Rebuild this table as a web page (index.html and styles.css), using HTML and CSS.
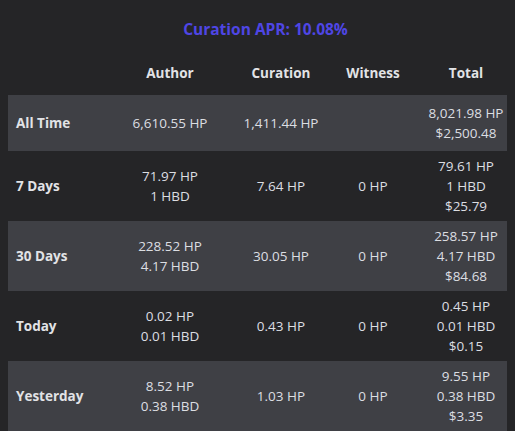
FILE: index.html
```html
<!DOCTYPE html>
<html>
<head>
<meta charset="utf-8">
<link rel="stylesheet" href="styles.css">
</head>
<body>
<div class="wrap">
  <div class="title">Curation APR: 10.08%</div>
  <table class="rewards">
    <colgroup>
      <col class="c-label"><col class="c-author"><col class="c-curation"><col class="c-witness"><col class="c-total">
    </colgroup>
    <thead>
      <tr class="head">
        <th></th><th>Author</th><th>Curation</th><th>Witness</th><th>Total</th>
      </tr>
    </thead>
    <tbody>
      <tr class="shaded short">
        <td class="label">All Time</td>
        <td>6,610.55 HP</td>
        <td>1,411.44 HP</td>
        <td></td>
        <td>8,021.98 HP<br>$2,500.48</td>
      </tr>
      <tr>
        <td class="label">7 Days</td>
        <td>71.97 HP<br>1 HBD</td>
        <td>7.64 HP</td>
        <td>0 HP</td>
        <td>79.61 HP<br>1 HBD<br>$25.79</td>
      </tr>
      <tr class="shaded">
        <td class="label">30 Days</td>
        <td>228.52 HP<br>4.17 HBD</td>
        <td>30.05 HP</td>
        <td>0 HP</td>
        <td>258.57 HP<br>4.17 HBD<br>$84.68</td>
      </tr>
      <tr>
        <td class="label">Today</td>
        <td>0.02 HP<br>0.01 HBD</td>
        <td>0.43 HP</td>
        <td>0 HP</td>
        <td>0.45 HP<br>0.01 HBD<br>$0.15</td>
      </tr>
      <tr class="shaded">
        <td class="label">Yesterday</td>
        <td>8.52 HP<br>0.38 HBD</td>
        <td>1.03 HP</td>
        <td>0 HP</td>
        <td>9.55 HP<br>0.38 HBD<br>$3.35</td>
      </tr>
    </tbody>
  </table>
</div>
</body>
</html>
```
FILE: styles.css
```css
html, body {
  overflow: hidden;
}
body {
  margin: 8px;
  background: #252527;
  color: #dcdee2;
  font-family: "Open Sans", "Noto Sans", sans-serif;
  font-size: 13.5px;
}
.wrap {
  width: 515px;
}
.title {
  text-align: center;
  color: #4f46e5;
  font-weight: 700;
  font-size: 15.5px;
  line-height: 20px;
  padding: 11px 0;
}
.rewards {
  width: 515px;
  table-layout: fixed;
  border-collapse: collapse;
  border-spacing: 0;
}
.c-label { width: 107px; }
.c-author { width: 110px; }
.c-curation { width: 112px; }
.c-witness { width: 72px; }
.c-total { width: 114px; }
.head th {
  height: 45px;
  padding: 0;
  font-weight: 700;
  color: #e2e3e6;
  text-align: center;
  vertical-align: middle;
}
.rewards td {
  height: 60px;
  padding: 5px 0;
  line-height: 20px;
  text-align: center;
  vertical-align: middle;
}
.rewards tr.short td {
  height: 46px;
}
.rewards td.label {
  text-align: left;
  padding-left: 8px;
  font-weight: 700;
  color: #e2e3e6;
}
tr.shaded {
  background: #3f4045;
}
```
